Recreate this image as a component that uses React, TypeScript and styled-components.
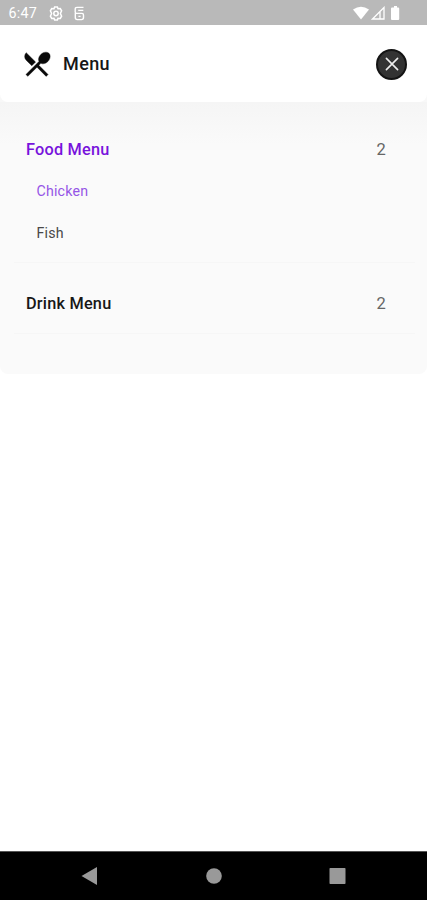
import React from "react";
import styled, { createGlobalStyle } from "styled-components";

const GlobalStyle = createGlobalStyle`
  *, *::before, *::after { box-sizing: border-box; }
  body { margin: 0; background: #fff; font-family: Roboto, sans-serif; }
`;

const Screen = styled.div`
  display: flex;
  flex-direction: column;
  width: 100%;
  height: 100vh;
  overflow: hidden;
  background: #fff;
`;

const StatusBar = styled.div`
  display: flex;
  justify-content: space-between;
  align-items: center;
  height: 25px;
  flex: none;
  padding: 1px 27px 0 8.5px;
  background: #b9b9b9;
  color: #fff;
`;

const StatusGroup = styled.div<{ $gap: number }>`
  display: flex;
  align-items: center;
  gap: ${(p) => p.$gap}px;
  svg { display: block; }
`;

const Clock = styled.span`
  width: 29.5px;
  font-size: 14.3px;
  letter-spacing: 0.2px;
  line-height: 16px;
`;

const Content = styled.main`
  flex: 1;
  min-height: 0;
`;

const Backdrop = styled.div`
  background: #f8f8f8;
`;

const Header = styled.header`
  display: flex;
  align-items: center;
  height: 77px;
  padding: 1px 20px 0 21px;
  border-radius: 0 0 8px 8px;
  background: #fff;
`;

const Title = styled.h1`
  flex: 1;
  margin: 0 0 0 10px;
  font-size: 18px;
  font-weight: 500;
  letter-spacing: 0.4px;
  line-height: 22px;
  color: #161616;
`;

const CloseButton = styled.button`
  display: grid;
  place-items: center;
  width: 31px;
  height: 31px;
  padding: 0;
  border: 2px solid #141414;
  border-radius: 50%;
  background: #333;
`;

const Panel = styled.section`
  height: 272px;
  padding: 26px 12px 0 14px;
  border-radius: 0 0 8px 8px;
  background: linear-gradient(#f5f5f5, #fafafa 42px);
`;

const Category = styled.div<{ $height: number }>`
  height: ${(p) => p.$height}px;
  border-bottom: 1px solid #f6f6f6;
`;

const CategoryRow = styled.div<{ $active?: boolean }>`
  display: flex;
  align-items: center;
  justify-content: space-between;
  height: 42px;
  padding: 0 29px 0 12px;
  font-size: 16.3px;
  font-weight: 500;
  letter-spacing: 0.22px;
  color: ${(p) => (p.$active ? "#7813dc" : "#171717")};
`;

const Count = styled.span`
  font-size: 16.5px;
  font-weight: 400;
  color: #666;
`;

const Item = styled.div<{ $active?: boolean }>`
  display: flex;
  align-items: center;
  height: 42px;
  padding-left: 22.5px;
  font-size: 14.2px;
  letter-spacing: 0.2px;
  color: ${(p) => (p.$active ? "#9555e6" : "#484848")};
`;

const Spacer = styled.div`
  height: 19px;
`;

const NavBar = styled.nav`
  display: flex;
  flex: none;
  align-items: center;
  justify-content: space-between;
  height: 49px;
  padding: 0 81px;
  border-top: 1px solid #555;
  background: #000;
  svg { display: block; }
`;

const CutleryIcon = () => (
  <svg width="32" height="32" viewBox="0 0 24 24" fill="#090909" stroke="#090909" strokeWidth="0.3">
    <path d="M8.1 13.34l2.83-2.83L3.91 3.5c-1.56 1.56-1.56 4.09 0 5.66l4.19 4.18zm6.78-1.81c1.53.71 3.68.21 5.27-1.38 1.91-1.91 2.28-4.65.81-6.12-1.46-1.46-4.2-1.1-6.12.81-1.59 1.59-2.09 3.74-1.38 5.27L3.7 19.87l1.41 1.41L12 14.41l6.88 6.88 1.41-1.41L13.41 13l1.47-1.47z" />
  </svg>
);

export default function App() {
  return (
    <Screen>
      <GlobalStyle />
      <StatusBar>
        <StatusGroup $gap={11}>
          <Clock>6:47</Clock>
          <svg width="14" height="15" viewBox="0 0 14 15" fill="none" stroke="#fff">
            <path d="M5 2.8 5.6 1h2.8L9 2.8l2.3-.2 1.3 2.3-1.2 2.6 1.2 2.6-1.3 2.3-2.3-.2L8.4 14H5.6L5 12.2l-2.3.2-1.3-2.3 1.2-2.6-1.2-2.6 1.3-2.3z" strokeWidth="1.5" />
            <circle cx="7" cy="7.5" r="2.2" strokeWidth="1.5" />
          </svg>
          <svg width="11" height="15" viewBox="0 0 11 15" fill="none" stroke="#fff" strokeWidth="1.4">
            <path d="M9.5 1.4H3Q1.2 1.4 1.2 3.2v2.7q0 1.5 1.5 1.5h5.2q1.6 0 1.6 1.7v2.5q0 2-2 2H3.3q-2 0-2-2V7M9.3 4.4H4.2M4.4 10.4h2.2" />
          </svg>
        </StatusGroup>
        <StatusGroup $gap={1.5}>
          <svg width="16" height="14" viewBox="0 0 16 14" fill="#fff">
            <path d="M0 3.5Q8-2 16 3.5L8 13.5z" />
          </svg>
          <svg width="14" height="14" viewBox="0 0 14 14" fill="none" stroke="#fff" strokeWidth="1.3">
            <path d="M1.5 13 13 1.5V13zM9 5.5V13" />
          </svg>
          <svg width="14" height="14" viewBox="0 0 14 14" fill="#fff">
            <path d="M8 0h3v1.5h1.2q1 0 1 1V13q0 1-1 1H6q-1 0-1-1V2.5q0-1 1-1h2z" />
          </svg>
        </StatusGroup>
      </StatusBar>
      <Content>
        <Backdrop>
          <Header>
            <CutleryIcon />
            <Title>Menu</Title>
            <CloseButton aria-label="Close">
              <svg width="14" height="14" viewBox="0 0 14 14" stroke="#eee" strokeWidth="1.6" strokeLinecap="round">
                <path d="m1.4 1.4 11.2 11.2M12.6 1.4 1.4 12.6" />
              </svg>
            </CloseButton>
          </Header>
        </Backdrop>
        <Panel>
          <Category $height={135}>
            <CategoryRow $active>
              Food Menu<Count>2</Count>
            </CategoryRow>
            <Item $active>Chicken</Item>
            <Item>Fish</Item>
          </Category>
          <Spacer />
          <Category $height={52}>
            <CategoryRow>
              Drink Menu<Count>2</Count>
            </CategoryRow>
          </Category>
        </Panel>
      </Content>
      <NavBar>
        <svg width="17" height="18" viewBox="0 0 17 18" fill="#999">
          <path d="M0.5 9 16 0v18z" />
        </svg>
        <svg width="16" height="16" viewBox="0 0 16 16" fill="#999">
          <circle cx="8" cy="8" r="7.8" />
        </svg>
        <svg width="17" height="17" viewBox="0 0 17 17" fill="#999">
          <rect x="0.5" y="0" width="16" height="16" rx="0.7" />
        </svg>
      </NavBar>
    </Screen>
  );
}
